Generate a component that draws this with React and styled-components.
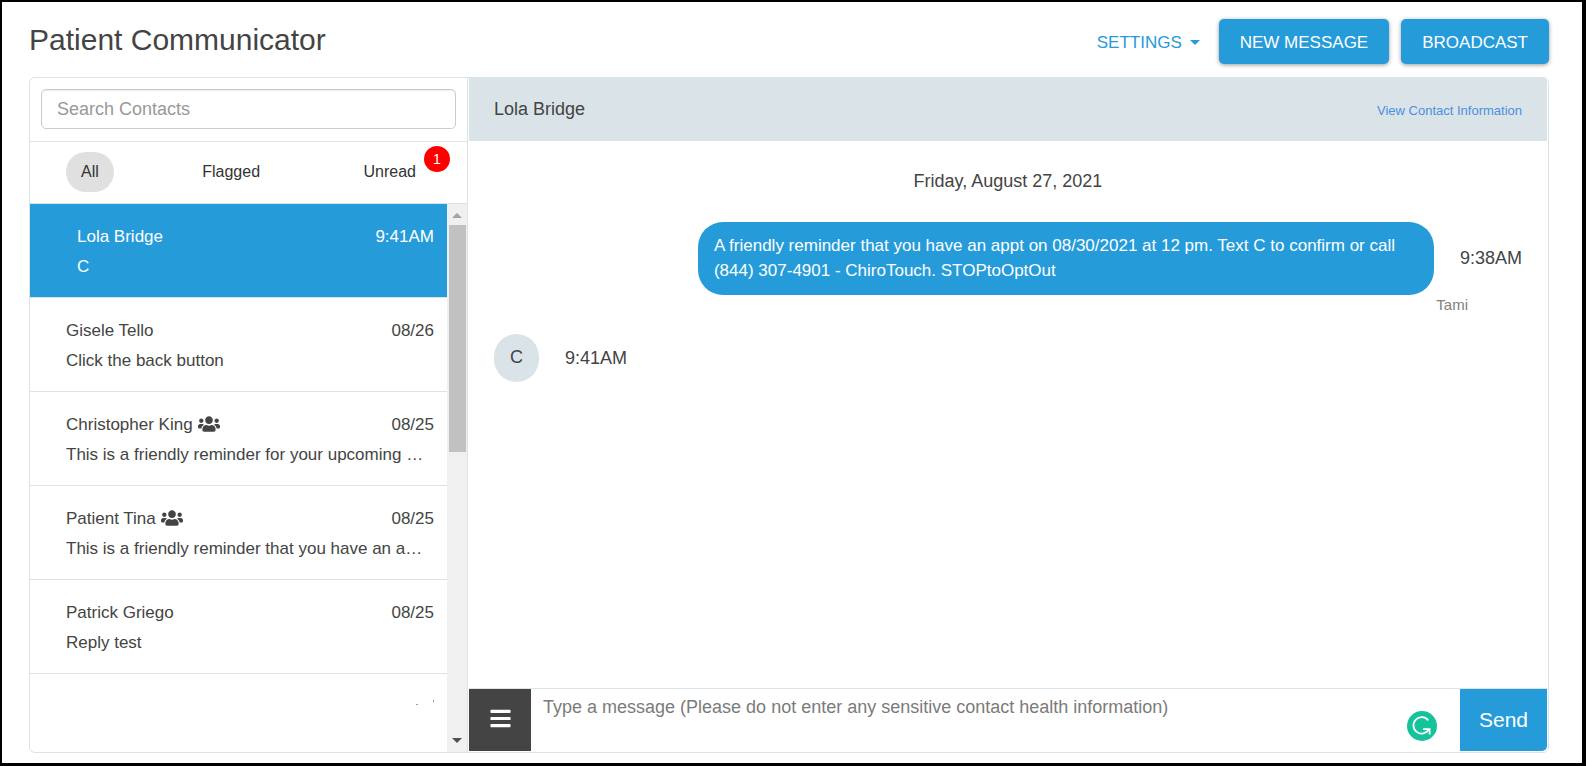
import React from "react";
import styled, { createGlobalStyle } from "styled-components";
import { FaBars, FaUsers } from "react-icons/fa";

const GlobalStyle = createGlobalStyle`
  *, *::before, *::after { box-sizing: border-box; }
  body {
    margin: 0;
    background: #fff;
    color: #444;
    font-family: "Liberation Sans", Arial, Helvetica, sans-serif;
    font-size: 18px;
  }
  button, input, textarea { font-family: inherit; }
`;

const blue = "#259bd9";
const line = "#dae3e8";

const Page = styled.div`
  display: flex;
  flex-direction: column;
  height: 100vh;
  min-height: 480px;
  padding: 0 33px 10px 27px;
  border: solid #000;
  border-width: 2px 4px 3px 2px;
`;

const TopBar = styled.header`
  display: flex;
  justify-content: space-between;
  align-items: flex-start;
  height: 75px;
  padding-top: 17px;
  flex-shrink: 0;
`;

const Title = styled.h1`
  margin: 0;
  font-size: 30px;
  font-weight: 400;
  line-height: 42px;
`;

const Actions = styled.div`
  display: flex;
  align-items: center;
  gap: 12px;
`;

const SettingsButton = styled.button`
  display: flex;
  align-items: center;
  gap: 8px;
  height: 45px;
  padding: 2px 7px 0;
  border: 0;
  background: none;
  color: ${blue};
  font-size: 17px;
`;

const Caret = styled.span`
  border: 5px solid transparent;
  border-top-color: currentColor;
  border-bottom: 0;
`;

const PrimaryButton = styled.button`
  height: 45px;
  padding: 2px 21px 0;
  border: 0;
  border-radius: 5px;
  background: ${blue};
  color: #fff;
  font-size: 17px;
  box-shadow: 0 1px 4px rgba(0, 0, 0, 0.4);
`;

const Panel = styled.main`
  display: flex;
  flex: 1;
  min-height: 0;
  border: 1px solid ${line};
  border-radius: 6px;
`;

const Sidebar = styled.aside`
  display: flex;
  flex-direction: column;
  width: 438px;
  flex-shrink: 0;
  border-right: 1px solid ${line};
`;

const SearchBox = styled.div`
  padding: 11px 11px 12px;
  border-bottom: 1px solid ${line};
`;

const SearchInput = styled.input`
  display: block;
  width: 100%;
  height: 40px;
  padding: 0 15px;
  border: 1px solid #ccc;
  border-radius: 5px;
  box-shadow: inset 0 1px 1px rgba(0, 0, 0, 0.08);
  font-size: 18px;
  &::placeholder { color: #999; opacity: 1; }
`;

const Filters = styled.nav`
  display: flex;
  justify-content: space-between;
  padding: 10px 36px 11px;
  border-bottom: 1px solid ${line};
`;

const FilterButton = styled.button`
  position: relative;
  height: 40px;
  padding: 0 15px;
  border: 0;
  border-radius: 20px;
  background: ${(p) => (p.$active ? "#e0e0e0" : "transparent")};
  color: #333;
  font-size: 16px;
`;

const Badge = styled.span`
  position: absolute;
  top: -6px;
  right: -19px;
  width: 26px;
  height: 26px;
  border-radius: 50%;
  background: #f00;
  color: #fff;
  font-size: 14px;
  line-height: 26px;
  text-align: center;
`;

const ListArea = styled.div`
  display: flex;
  flex: 1;
  min-height: 0;
`;

const ContactList = styled.ul`
  flex: 1;
  min-width: 0;
  margin: 0;
  padding: 0;
  overflow: hidden;
  list-style: none;
`;

const Contact = styled.li`
  padding: 18px 13px 15px ${(p) => (p.$active ? 47 : 36)}px;
  border-bottom: 1px solid ${line};
  background: ${(p) => (p.$active ? blue : "transparent")};
  color: ${(p) => (p.$active ? "#fff" : "inherit")};
  font-size: 17px;
  line-height: 30px;
`;

const ContactHead = styled.div`
  display: flex;
  justify-content: space-between;
`;

const ContactName = styled.span`
  display: flex;
  align-items: center;
  gap: 5px;
  svg { margin-bottom: 2px; }
`;

const Preview = styled.div`
  overflow: hidden;
  text-overflow: ellipsis;
  white-space: nowrap;
`;

const LoadingRow = styled.li`
  display: flex;
  justify-content: flex-end;
  padding: 26px 13px;
`;

const ScrollTrack = styled.div`
  display: flex;
  flex-direction: column;
  align-items: center;
  justify-content: space-between;
  width: 20px;
  background: #f0f0f0;
`;

const ScrollTop = styled.div`
  display: flex;
  flex-direction: column;
  align-items: center;
  gap: 7px;
  padding-top: 9px;
  height: 248px;
`;

const ArrowUp = styled.span`
  border: 5px solid transparent;
  border-bottom-color: #a3a3a3;
  border-top: 0;
`;

const ArrowDown = styled.span`
  margin-bottom: 9px;
  border: 5px solid transparent;
  border-top-color: #505050;
  border-bottom: 0;
`;

const Thumb = styled.div`
  flex: 1;
  width: 17px;
  background: #c1c1c1;
`;

const Conversation = styled.section`
  display: flex;
  flex-direction: column;
  flex: 1;
  min-width: 0;
  padding: 0 1px 1px;
`;

const ConversationHead = styled.div`
  display: flex;
  align-items: center;
  justify-content: space-between;
  height: 63px;
  padding: 0 25px;
  border-radius: 0 4px 0 0;
  background: ${line};
  flex-shrink: 0;
`;

const ContactLink = styled.a`
  padding-top: 2px;
  color: #4a90e2;
  font-size: 13px;
  text-decoration: none;
`;

const Thread = styled.div`
  display: flex;
  flex-direction: column;
  flex: 1;
  min-height: 0;
  padding: 28px 25px;
  overflow: hidden;
`;

const DateLine = styled.div`
  margin-bottom: 28px;
  line-height: 25px;
  text-align: center;
`;

const Message = styled.div`
  display: flex;
  align-items: center;
  justify-content: ${(p) => (p.$sent ? "flex-end" : "flex-start")};
  gap: 26px;
`;

const Bubble = styled.div`
  max-width: 736px;
  padding: 11px 16px 12px;
  border-radius: 25px;
  background: ${(p) => (p.$sent ? blue : line)};
  color: ${(p) => (p.$sent ? "#fff" : "inherit")};
  font-size: ${(p) => (p.$sent ? 17 : 18)}px;
  line-height: 25px;
`;

const Sender = styled.div`
  margin-bottom: 19px;
  padding-right: 54px;
  color: #808080;
  font-size: 15px;
  line-height: 20px;
  text-align: right;
`;

const Composer = styled.form`
  display: flex;
  height: 63px;
  border-top: 1px solid ${line};
  flex-shrink: 0;
`;

const MenuButton = styled.button`
  display: flex;
  align-items: center;
  justify-content: center;
  width: 62px;
  padding: 0 0 4px;
  border: 0;
  background: #444;
  color: #fff;
`;

const MessageInput = styled.textarea`
  flex: 1;
  min-width: 0;
  padding: 6px 12px;
  border: 0;
  outline: 0;
  resize: none;
  font-size: 18px;
  line-height: 25px;
  &::placeholder { color: #7b7b7b; opacity: 1; }
`;

const GrammarButton = styled.button`
  align-self: flex-end;
  width: 30px;
  height: 30px;
  margin: 0 23px 10px 0;
  padding: 0;
  border: 0;
  background: none;
  svg { display: block; }
`;

const SendButton = styled.button`
  width: 87px;
  padding: 0;
  border: 0;
  border-radius: 0 0 5px 0;
  background: ${blue};
  color: #fff;
  font-size: 21px;
`;

const contacts = [
  { name: "Lola Bridge", when: "9:41AM", text: "C", active: true },
  { name: "Gisele Tello", when: "08/26", text: "Click the back button" },
  { name: "Christopher King", when: "08/25", group: true, text: "This is a friendly reminder for your upcoming …" },
  { name: "Patient Tina", when: "08/25", group: true, text: "This is a friendly reminder that you have an a…" },
  { name: "Patrick Griego", when: "08/25", text: "Reply test" },
];

export default function App() {
  return (
    <Page>
      <GlobalStyle />
      <TopBar>
        <Title>Patient Communicator</Title>
        <Actions>
          <SettingsButton type="button">SETTINGS <Caret /></SettingsButton>
          <PrimaryButton type="button">NEW MESSAGE</PrimaryButton>
          <PrimaryButton type="button">BROADCAST</PrimaryButton>
        </Actions>
      </TopBar>
      <Panel>
        <Sidebar>
          <SearchBox>
            <SearchInput type="text" placeholder="Search Contacts" aria-label="Search Contacts" />
          </SearchBox>
          <Filters>
            <FilterButton type="button" $active>All</FilterButton>
            <FilterButton type="button">Flagged</FilterButton>
            <FilterButton type="button">Unread<Badge>1</Badge></FilterButton>
          </Filters>
          <ListArea>
            <ContactList>
              {contacts.map((c) => (
                <Contact key={c.name} $active={c.active}>
                  <ContactHead>
                    <ContactName>{c.name}{c.group && <FaUsers size={22} />}</ContactName>
                    <span>{c.when}</span>
                  </ContactHead>
                  <Preview>{c.text}</Preview>
                </Contact>
              ))}
              <LoadingRow>
                <svg width="19" height="6" viewBox="0 0 19 6" aria-hidden="true">
                  <path d="M1 4h2v1H1zM18 0h1v2h-1z" fill="#999" />
                </svg>
              </LoadingRow>
            </ContactList>
            <ScrollTrack aria-hidden="true">
              <ScrollTop><ArrowUp /><Thumb /></ScrollTop>
              <ArrowDown />
            </ScrollTrack>
          </ListArea>
        </Sidebar>
        <Conversation>
          <ConversationHead>
            <span>Lola Bridge</span>
            <ContactLink href="#contact">View Contact Information</ContactLink>
          </ConversationHead>
          <Thread>
            <DateLine>Friday, August 27, 2021</DateLine>
            <Message $sent>
              <Bubble $sent>
                A friendly reminder that you have an appt on 08/30/2021 at 12 pm. Text C to confirm or call (844) 307-4901 - ChiroTouch. STOPtoOptOut
              </Bubble>
              <span>9:38AM</span>
            </Message>
            <Sender>Tami</Sender>
            <Message>
              <Bubble>C</Bubble>
              <span>9:41AM</span>
            </Message>
          </Thread>
          <Composer>
            <MenuButton type="button" aria-label="Menu"><FaBars size={23} /></MenuButton>
            <MessageInput
              aria-label="Message"
              placeholder="Type a message (Please do not enter any sensitive contact health information)"
            />
            <GrammarButton type="button" aria-label="Grammar check">
              <svg width="30" height="30" viewBox="0 0 30 30">
                <circle cx="15" cy="15" r="15" fill="#15c39a" />
                <path d="M21.2 9.4A8.2 8.2 0 1 0 21.8 18.4" fill="none" stroke="#fff" strokeWidth="1.8" />
                <path d="M16 18.1H22.6V23.6" fill="none" stroke="#fff" strokeWidth="1.8" />
              </svg>
            </GrammarButton>
            <SendButton type="button">Send</SendButton>
          </Composer>
        </Conversation>
      </Panel>
    </Page>
  );
}
